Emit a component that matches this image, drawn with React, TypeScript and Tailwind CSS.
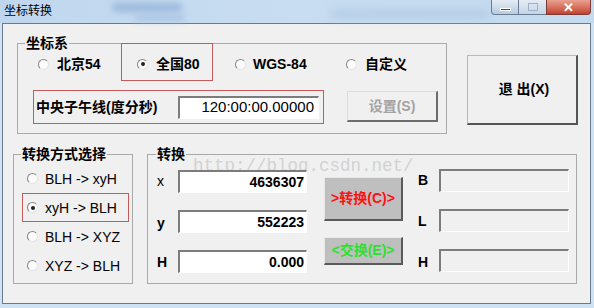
import React from "react";

const Radio = ({ checked }: { checked?: boolean }) => (
  <span className="flex h-[11px] w-[11px] shrink-0 items-center justify-center rounded-full border border-b-[#e4e4e4] border-l-[#858585] border-r-[#e4e4e4] border-t-[#858585] bg-[#fbfbfb]">
    {checked && <span className="h-[4px] w-[4px] rounded-full bg-[#222]" />}
  </span>
);

const Group = ({
  title,
  left,
  className,
  children,
}: {
  title: string;
  left: string;
  className: string;
  children: React.ReactNode;
}) => (
  <div className={`relative shrink-0 border border-[#a9a9a9] ${className}`}>
    <span
      className={`absolute -top-[10px] ${left} bg-[#f0f0f0] px-[1px] text-[14px] font-bold leading-[18px] text-black`}
    >
      {title}
    </span>
    {children}
  </div>
);

const Field = ({ value, disabled }: { value?: string; disabled?: boolean }) => (
  <div
    className={`flex h-full w-full items-center justify-end border-l-2 border-t-2 border-b border-r border-b-white border-r-white border-l-[#7c7c7c] border-t-[#7c7c7c] pr-[2px] text-[14px] font-bold ${
      disabled ? "bg-[#f0f0f0]" : "bg-white"
    }`}
  >
    {value}
  </div>
);

const modes = [
  { label: "BLH -> xyH" },
  { label: "xyH -> BLH", checked: true },
  { label: "BLH -> XYZ" },
  { label: "XYZ -> BLH" },
];

const App = () => {
  return (
    <main className="flex h-[308px] w-[594px] flex-col overflow-hidden bg-[#cfe2f3] font-['Liberation_Sans','Noto_Sans_CJK_SC',sans-serif] text-black">
      {/* title bar */}
      <div className="relative flex h-[23px] shrink-0 items-start bg-gradient-to-r from-[#bfd7ee] via-[#c8ddf1] to-[#c3daef]">
        <div className="absolute left-[112px] top-[3px] h-[9px] w-[70px] rounded bg-[#9db9dc] blur-[3px]" />
        <div className="absolute left-[135px] top-[15px] h-[6px] w-[50px] rounded bg-[#a9c3e2] blur-[3px]" />
        <div className="absolute left-[330px] top-[10px] h-[8px] w-[160px] rounded bg-[#b3cbe5] blur-[4px]" />
        <span className="relative ml-[4px] mt-[2px] font-['Noto_Sans_CJK_SC',sans-serif] text-[12px] leading-[16px]">
          坐标转换
        </span>
        <div className="relative ml-auto mr-[3px] flex h-[15px]">
          <div className="flex w-[28px] items-center justify-center rounded-bl-[4px] border border-t-0 border-[#6a7c92] bg-gradient-to-b from-[#e4ecf5] to-[#b8cbe0]">
            <span className="mt-[5px] h-[3px] w-[11px] border border-white bg-[#3c4a5c]" />
          </div>
          <div className="flex w-[27px] items-center justify-center border-b border-[#6a7c92] bg-gradient-to-b from-[#e4ecf5] to-[#c4d4e6]">
            <span className="h-[8px] w-[10px] border border-[#9fb2c8]" />
          </div>
          <div className="flex w-[45px] items-center justify-center rounded-br-[4px] border border-t-0 border-[#7a3a36] bg-gradient-to-b from-[#e9a090] to-[#c4402f] text-[13px] font-bold leading-none text-white">
            ✕
          </div>
        </div>
      </div>

      {/* client area */}
      <div className="ml-[2px] mr-[3px] h-[281px] shrink-0 border border-[#687a8b] bg-[#f0f0f0]">
        {/* top row */}
        <div className="flex h-[110px] items-start">
          <Group title="坐标系" left="left-[7px]" className="ml-[14px] mt-[19px] h-[91px] w-[430px]">
            <div className="-mt-px flex h-[38px] items-start text-[14px] font-bold leading-[18px]">
              <label className="ml-[20px] mt-[12px] flex w-[83px] items-center gap-[8px]">
                <Radio />
                北京54
              </label>
              <label className="flex h-[38px] w-[92px] items-center gap-[8px] border border-[#c75a5a] pl-[15px] pt-[4px]">
                <Radio checked />
                全国80
              </label>
              <label className="ml-[22px] mt-[12px] flex w-[111px] items-center gap-[7px]">
                <Radio />
                WGS-84
              </label>
              <label className="mt-[12px] flex items-center gap-[8px]">
                <Radio />
                自定义
              </label>
            </div>
            <div className="mt-[9px] flex items-start">
              <div className="ml-[15px] flex h-[34px] w-[291px] items-center border border-[#c75a5a] pl-[2px]">
                <span className="w-[142px] text-[14px] font-bold leading-[18px]">中央子午线(度分秒)</span>
                <div className="h-[23px] w-[141px]">
                  <div className="flex h-full w-full items-center justify-end border-l-2 border-t-2 border-b border-r border-b-white border-r-white border-l-[#7c7c7c] border-t-[#7c7c7c] bg-white pr-[4px] text-[15px]">
                    120:00:00.00000
                  </div>
                </div>
              </div>
              <button className="ml-[23px] mt-px flex h-[31px] w-[91px] items-center justify-center border-b-2 border-l border-r-2 border-t border-b-[#6d6d6d] border-l-[#dcdcdc] border-r-[#6d6d6d] border-t-[#dcdcdc] bg-[#f0f0f0] text-[14px] font-bold text-[#a3a3a3]">
                设置(S)
              </button>
            </div>
          </Group>
          <button className="ml-[20px] mt-[31px] flex h-[70px] w-[111px] shrink-0 items-center justify-center border-b-2 border-l border-r-2 border-t border-b-[#555] border-l-[#b9b9b9] border-r-[#555] border-t-[#b9b9b9] bg-[#f0f0f0] pl-[4px] text-[14px] font-bold">
            退 出(X)
          </button>
        </div>

        {/* bottom row */}
        <div className="mt-[20px] flex items-start">
          <Group title="转换方式选择" left="left-[7px]" className="ml-[10px] h-[130px] w-[120px]">
            <div className="mt-[9px] flex flex-col">
              {modes.map((m) => (
                <label
                  key={m.label}
                  className={`ml-[8px] flex h-[29px] w-[107px] items-center gap-[7px] border pl-[4px] text-[14px] leading-[18px] ${
                    m.checked ? "border-[#c75a5a]" : "border-transparent"
                  }`}
                >
                  <Radio checked={m.checked} />
                  {m.label}
                </label>
              ))}
            </div>
          </Group>

          <Group title="转换" left="left-[8px]" className="ml-[14px] h-[130px] w-[430px]">
            <span className="pointer-events-none absolute left-[45px] top-[0px] font-['Liberation_Mono',monospace] text-[17.5px] leading-[22px] text-[#d2d2d2]">
              http://blog.csdn.net/
            </span>
            <div className="relative flex items-start">
              <div className="ml-[9px] mt-[15px] grid grid-cols-[21px_129px] gap-y-[17px]">
                <span className="flex h-[23px] items-center text-[14px]">x</span>
                <div className="h-[23px]">
                  <Field value="4636307" />
                </div>
                <span className="flex h-[23px] items-center pt-[3px] text-[14px] font-bold">y</span>
                <div className="h-[23px]">
                  <Field value="552223" />
                </div>
                <span className="flex h-[23px] items-center pt-[2px] text-[14px] font-bold">H</span>
                <div className="h-[23px]">
                  <Field value="0.000" />
                </div>
              </div>

              <div className="ml-[17px] flex w-[79px] flex-col">
                <button className="mt-[22px] flex h-[44px] items-center justify-center border-b-2 border-l border-r-2 border-t border-b-[#5a5a5a] border-l-[#e8e8e8] border-r-[#5a5a5a] border-t-[#e8e8e8] bg-[#bfbfbf] text-[14px] font-bold text-[#ff1010]">
                  &gt;转换(C)&gt;
                </button>
                <button className="mt-[16px] flex h-[28px] items-center justify-center border-b-2 border-l border-r-2 border-t border-b-[#5a5a5a] border-l-[#e8e8e8] border-r-[#5a5a5a] border-t-[#e8e8e8] bg-[#bfbfbf] text-[14px] font-bold text-[#2ee02e]">
                  &lt;交换(E)&gt;
                </button>
              </div>

              <div className="ml-[15px] mt-[14px] grid grid-cols-[21px_130px] gap-y-[17px]">
                <span className="flex h-[23px] items-center text-[14px] font-bold">B</span>
                <div className="h-[23px]">
                  <Field disabled />
                </div>
                <span className="flex h-[23px] items-center pt-[2px] text-[14px] font-bold">L</span>
                <div className="h-[23px]">
                  <Field disabled />
                </div>
                <span className="flex h-[23px] items-center pt-[4px] text-[14px] font-bold">H</span>
                <div className="h-[23px]">
                  <Field disabled />
                </div>
              </div>
            </div>
          </Group>
        </div>
      </div>
    </main>
  );
};

export default App;
